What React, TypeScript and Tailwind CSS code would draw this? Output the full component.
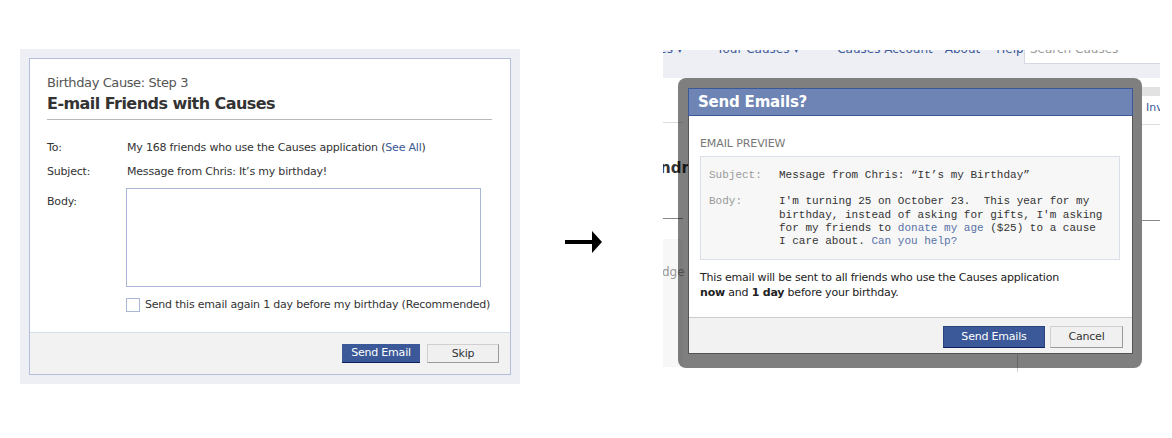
import React from "react";

const ui = { fontFamily: '"DejaVu Sans", "Liberation Sans", sans-serif' };
const mono = { fontFamily: '"Liberation Mono", "DejaVu Sans Mono", monospace' };

function LeftPanel() {
  return (
    <div className="ml-[20px] mt-[49px] w-[500px] h-[335px] bg-[#edeff4] pt-[9px] pl-[9px] pr-[9px] pb-[9px]" style={ui}>
      <div className="h-[317px] border border-[#b3bedb] bg-white flex flex-col">
        <div className="px-[17px] pt-[16px] flex-1">
          <div className="text-[13px] leading-[16px] text-[#555] tracking-[-0.4px]">Birthday Cause: Step 3</div>
          <div className="mt-[3px] text-[16px] leading-[20px] font-bold text-[#333] tracking-[-0.55px]">E-mail Friends with Causes</div>
          <div className="mt-[5px] mr-[1px] h-px bg-[#b9b9b9]" />
          <div className="mt-[21px] text-[11px] leading-[14px] text-[#333] tracking-[-0.2px]">
            <div className="flex">
              <div className="w-[80px]">To:</div>
              <div>
                My 168 friends who use the Causes application (<span className="text-[#3b5998]">See All</span>)
              </div>
            </div>
            <div className="flex mt-[10px]">
              <div className="w-[80px]">Subject:</div>
              <div>Message from Chris: It’s my birthday!</div>
            </div>
            <div className="flex mt-[9px]">
              <div className="w-[79px] pt-[7px]">Body:</div>
              <div>
                <div className="w-[355px] h-[99px] border border-[#a9b6d6] bg-white" />
                <div className="mt-[11px] flex items-center">
                  <div className="w-[14px] h-[14px] border border-[#a9b6d6] bg-white" />
                  <span className="ml-[5px]">Send this email again 1 day before my birthday (Recommended)</span>
                </div>
              </div>
            </div>
          </div>
        </div>
        <div className="h-[42px] border-t border-[#d5dcea] bg-[#f2f2f2] flex justify-end items-start pt-[11px] pr-[11px] gap-[7px]">
          <div className="w-[78px] h-[19px] bg-[#3b5998] border-b border-[#0e1f5b] text-white text-[11px] leading-[18px] text-center tracking-[-0.2px]">Send Email</div>
          <div className="w-[72px] h-[19px] bg-[#f0f0f0] border border-[#9a9a9a] border-t-[#cfcfcf] border-l-[#cfcfcf] text-[#333] text-[11px] leading-[17px] text-center tracking-[-0.2px]">Skip</div>
        </div>
      </div>
    </div>
  );
}

function Arrow() {
  return (
    <div className="ml-[45px] mt-[231px]">
      <svg width="38" height="22" viewBox="0 0 38 22">
        <rect x="0" y="9" width="28" height="4" fill="#000" />
        <path d="M27 0 L37 11 L27 22 Z" fill="#000" />
      </svg>
    </div>
  );
}

function RightPanel() {
  return (
    <div className="ml-[60px] mt-[50px] w-[497px] h-[322px] relative overflow-hidden" style={ui}>
      {/* background page */}
      <div className="h-[28px] bg-[#edeff4] flex items-start overflow-hidden">
        <div className="flex gap-[20px] text-[12px] leading-[14px] text-[#3b5998] mt-[-8px] whitespace-nowrap">
          <span className="ml-[-10px]">ses ▾</span>
          <span className="ml-[14px]">Your Causes ▾</span>
          <span className="ml-[18px]">Causes Account</span>
          <span className="ml-[-8px]">About</span>
          <span className="ml-[-4px]">Help</span>
        </div>
        <div className="ml-auto w-[136px] h-[22px] bg-white border-l border-b border-[#d4d8e2] text-[12px] leading-[14px] text-[#999] pl-[5px] mt-[-8px] pt-0">Search Causes</div>
      </div>
      <div className="flex">
        <div className="w-[20px] relative">
          <div className="mt-[44px] h-px bg-[#dddddd]" />
          <div className="mt-[36px] text-[15px] font-bold text-[#333] leading-[18px] ml-[-3px] whitespace-nowrap">ndra</div>
          <div className="mt-[41px] h-px bg-[#8a8a8a]" />
          <div className="mt-[20px] h-[128px] bg-[#f7f7f7] pt-[26px]">
            <div className="text-[12px] text-[#999] ml-[-1px] whitespace-nowrap leading-[14px]">dge /</div>
          </div>
        </div>
        <div className="flex-1" />
        <div className="w-[18px]">
          <div className="mt-[9px] h-[9px] bg-[#e2e2e2]" />
          <div className="mt-[5px] text-[11px] leading-[14px] text-[#3b5998] pl-[4px]">Inv</div>
          <div className="mt-[9px] h-px bg-[#dddddd]" />
          <div className="mt-[95px] h-px bg-[#8a8a8a]" />
        </div>
      </div>
      <div className="absolute left-[354px] top-[172px] w-px h-[150px] bg-[#cfcfcf]" />

      {/* modal overlay */}
      <div className="absolute left-[15px] top-[28px] w-[464px] h-[290px] rounded-[8px] bg-[rgba(0,0,0,0.5)] pt-[10px] px-[10px]">
        <div className="w-[445px] h-[266px] bg-white border border-[#555] border-t-0 flex flex-col">
          <div className="h-[28px] bg-[#6d84b4] border border-[#3b5998] ml-[-1px] mr-[-1px] text-white text-[15px] font-bold leading-[26px] pl-[9px] tracking-[-0.2px]">Send Emails?</div>
          <div className="flex-1 px-[11px] pt-[21px]">
            <div className="text-[11px] leading-[14px] text-[#777] tracking-[-0.1px]">EMAIL PREVIEW</div>
            <div className="mt-[5px] w-[420px] h-[104px] bg-[#f7f7f7] border border-[#d8dfea] pl-[8px] pt-[12px] text-[11px] leading-[13.3px]" style={mono}>
              <div className="flex">
                <div className="w-[70px] text-[#999]">Subject:</div>
                <div className="text-[#333]">Message from Chris: “It’s my Birthday”</div>
              </div>
              <div className="flex mt-[13px]">
                <div className="w-[70px] text-[#999]">Body:</div>
                <div className="text-[#333] whitespace-pre">
                  {"I'm turning 25 on October 23.  This year for my\nbirthday, instead of asking for gifts, I'm asking\nfor my friends to "}
                  <span className="text-[#5872a7]">donate my age</span>
                  {" ($25) to a cause\nI care about. "}
                  <span className="text-[#5872a7]">Can you help?</span>
                </div>
              </div>
            </div>
            <div className="mt-[10px] text-[11px] leading-[15px] text-[#222] tracking-[-0.2px]">
              This email will be sent to all friends who use the Causes application
              <br />
              <b>now</b> and <b>1 day</b> before your birthday.
            </div>
          </div>
          <div className="h-[36px] border-t border-[#cccccc] bg-[#f2f2f2] flex justify-end items-start pt-[8px] pr-[9px] gap-[5px]">
            <div className="w-[102px] h-[22px] bg-[#3b5998] border border-[#29447e] border-b-[#0e1f5b] text-white text-[11px] leading-[20px] text-center tracking-[-0.2px]">Send Emails</div>
            <div className="w-[73px] h-[22px] bg-[#f0f0f0] border border-[#9a9a9a] border-t-[#cfcfcf] border-l-[#cfcfcf] text-[#333] text-[11px] leading-[20px] text-center tracking-[-0.2px]">Cancel</div>
          </div>
        </div>
      </div>
    </div>
  );
}

export default function App() {
  return (
    <div className="w-[1172px] h-[438px] bg-white flex items-start">
      <LeftPanel />
      <Arrow />
      <RightPanel />
    </div>
  );
}
